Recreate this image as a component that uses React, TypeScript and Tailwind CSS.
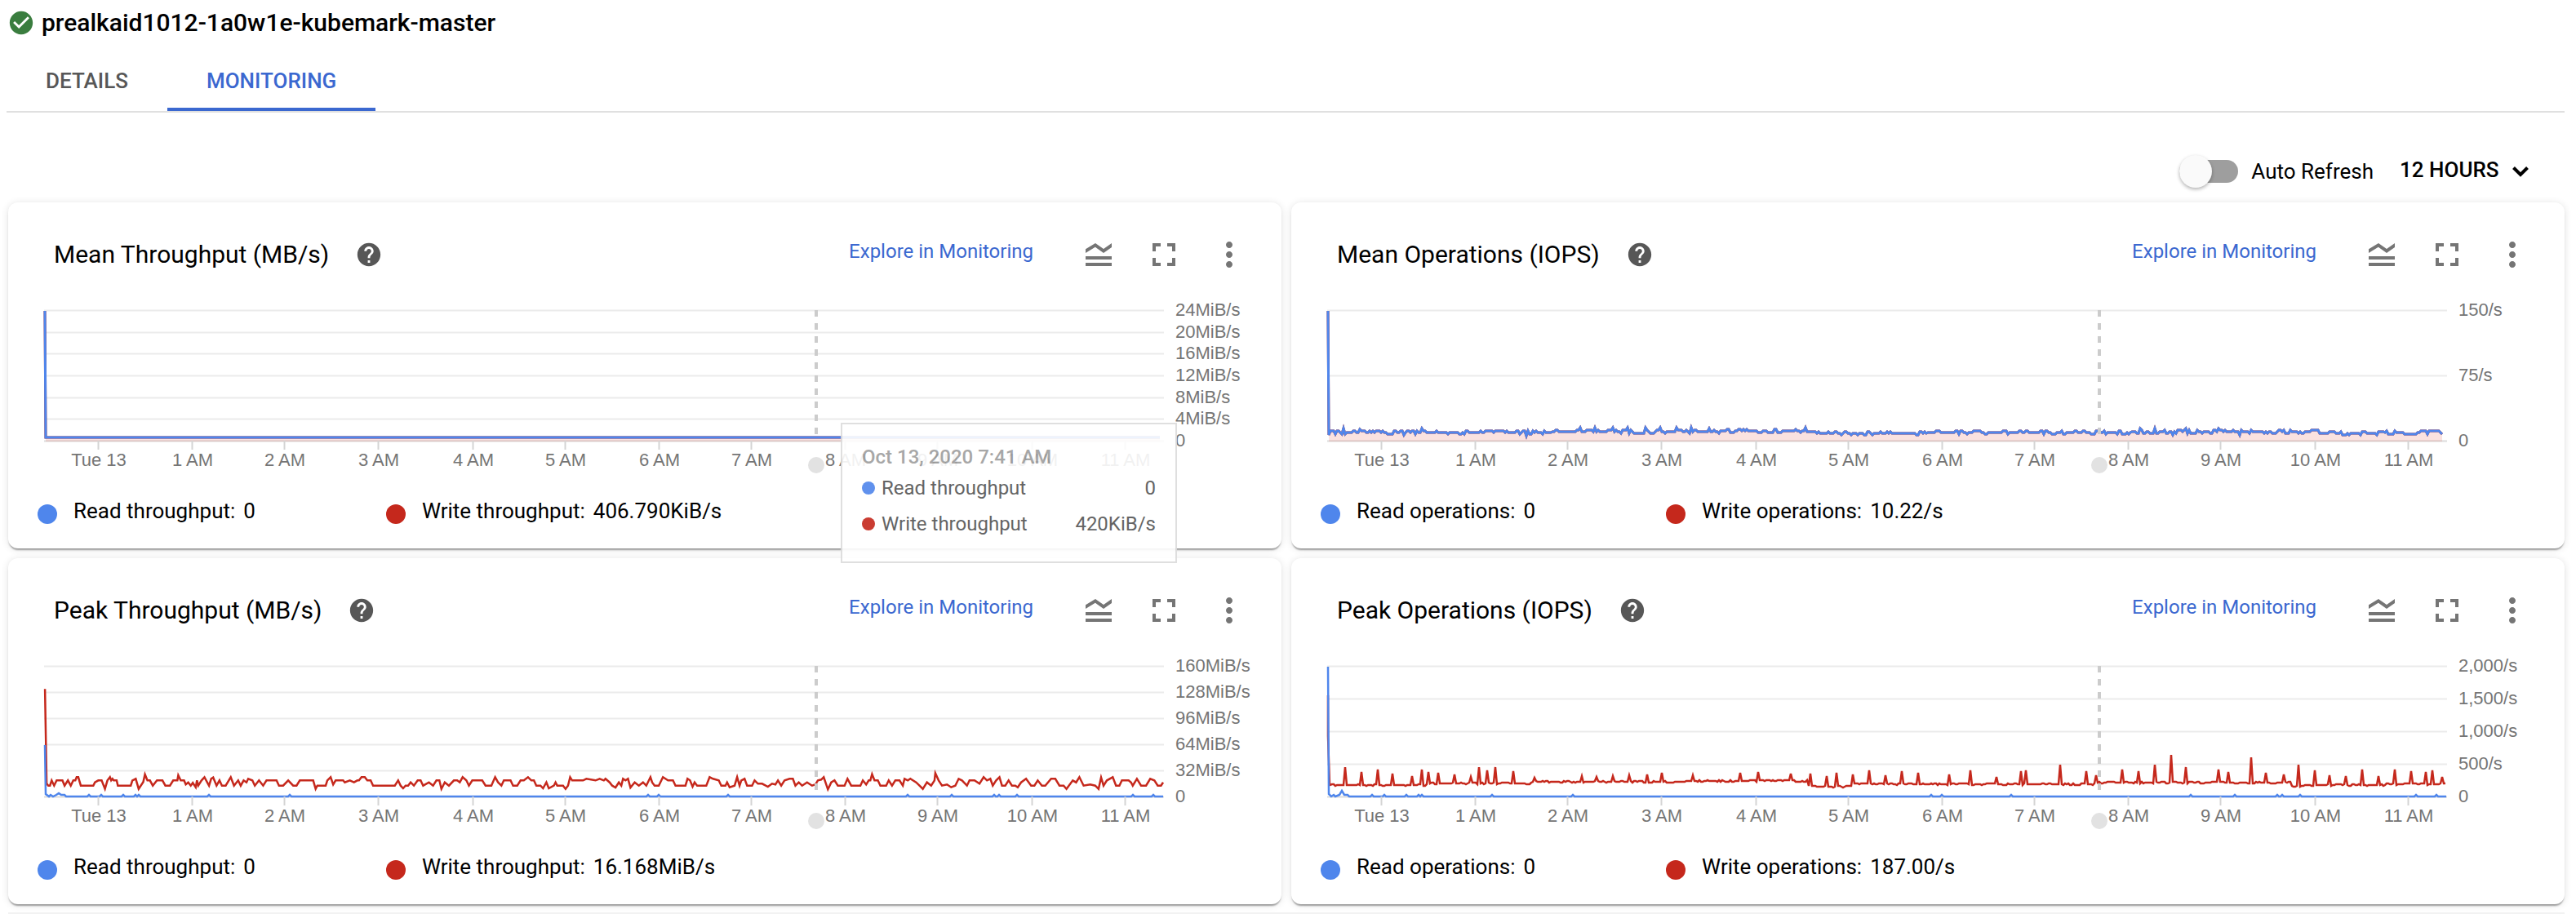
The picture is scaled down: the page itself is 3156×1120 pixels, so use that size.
import type { ReactNode } from "react";
import { MdCheckCircle, MdFullscreen, MdHelp, MdMoreVert } from "react-icons/md";

type Point = [number, number];

const BLUE = "#4f86ec";
const RED = "#c5281c";
const TICK_X = [110, 225, 338, 453, 569, 682, 797, 910, 1025, 1138, 1254, 1368];
const HOURS = ["Tue 13", "1 AM", "2 AM", "3 AM", "4 AM", "5 AM", "6 AM", "7 AM", "8 AM", "9 AM", "10 AM", "11 AM"];

/** Small deterministic noise source, so every render draws the same series. */
function noise(seed: number) {
  let s = seed;
  return () => {
    s = (s * 16807) % 2147483647;
    return s / 2147483647;
  };
}

/** A series that hovers around stepwise levels, with peaks and dips on top. */
function series(start: Point[], levels: Point[], peaks: Point[], end: number, step: number, seed: number): Point[] {
  const rand = noise(seed);
  const out: Point[] = [...start];
  let offset = 0;
  const first = Math.ceil(start[start.length - 1][0] / 2) * 2 + 2;
  for (let x = first; x <= end; x += 2) {
    let base = levels[0][1];
    for (const [from, value] of levels) if (x >= from) base = value;
    const peak = peaks.find(([px]) => px === x || px === x + 1);
    const r = rand();
    if (r < 0.22) offset = -step;
    else if (r < 0.34) offset = step;
    else if (r < 0.7) offset = 0;
    out.push([x, peak ? peak[1] : base + offset]);
  }
  return out;
}

const toPath = (pts: Point[]) => "M" + pts.map(([x, y]) => `${x} ${y}`).join("L");

const meanOps = series(
  [[45, 25], [46, 177]],
  [[44, 174], [320, 173], [525, 172], [630, 175], [780, 174], [1030, 173], [1260, 175], [1340, 174]],
  [[64, 169], [84, 170], [138, 177], [160, 169], [288, 178], [354, 168], [372, 168], [394, 168], [412, 168], [434, 168], [452, 168], [472, 168], [491, 168], [512, 169], [630, 168], [1040, 169], [1058, 169], [1080, 177], [1096, 169], [1136, 169], [1162, 177]],
  1410,
  2,
  77,
);

const peakOpsWrite = series(
  [[45, 60], [45, 110], [47, 170]],
  [[44, 170], [166, 168], [294, 166], [486, 165], [634, 172], [690, 169], [986, 167], [1225, 172], [1240, 170], [1340, 169]],
  [[66, 148], [86, 154], [107, 151], [125, 156], [148, 159], [161, 151], [168, 154], [180, 155], [200, 157], [220, 160], [230, 148], [241, 152], [250, 148], [272, 153], [298, 161], [356, 159], [374, 160], [395, 159], [414, 158], [436, 157], [454, 155], [492, 158], [550, 155], [572, 154], [612, 156], [636, 156], [656, 159], [668, 155], [688, 157], [708, 152], [728, 158], [748, 153], [768, 155], [806, 157], [832, 152], [864, 160], [894, 153], [900, 152], [942, 145], [974, 153], [986, 158], [1018, 151], [1038, 153], [1058, 145], [1078, 133], [1096, 148], [1136, 151], [1148, 154], [1176, 136], [1194, 155], [1216, 157], [1234, 145], [1254, 152], [1272, 158], [1292, 159], [1312, 151], [1332, 159], [1352, 151], [1372, 153], [1390, 154], [1398, 152], [1410, 160]],
  1414,
  1,
  4242,
);

/* Write peaks as pairs: time position, then level. */
const peakThroughputRaw: number[] = [
  108, 553, 112, 900, 116, 908, 120, 908, 124, 889, 130, 908, 136, 889, 150, 889, 155, 908, 163, 889, 170, 908, 176, 889, 181, 889, 184, 877, 188, 877, 194, 908, 224, 908, 228, 896, 236, 889, 244, 889, 252, 920, 258, 889, 264, 877, 267, 889, 270, 883, 273, 889, 280, 889, 283, 908, 314, 908, 318, 889, 326, 883, 333, 920, 344, 895, 348, 867, 354, 889, 360, 889, 367, 908, 377, 889, 390, 889, 397, 908, 408, 908, 416, 889, 426, 889, 428, 870, 434, 889, 442, 889, 446, 904, 452, 896, 458, 908, 463, 898, 470, 914, 473, 889, 476, 908, 484, 889, 491, 877, 502, 908, 507, 883, 512, 878, 520, 908, 527, 889, 533, 908, 542, 908, 554, 877, 562, 908, 572, 889, 578, 908, 585, 889, 592, 896, 596, 883, 606, 889, 612, 908, 622, 889, 632, 908, 640, 889, 664, 889, 670, 908, 680, 908, 692, 889, 704, 908, 712, 908, 720, 889, 752, 889, 758, 920, 762, 908, 782, 908, 786, 889, 794, 877, 800, 904, 806, 889, 824, 889, 828, 896, 840, 889, 850, 896, 858, 889, 862, 889, 868, 877, 876, 877, 882, 889, 890, 889, 896, 908, 948, 908, 956, 889, 962, 908, 968, 918, 974, 908, 980, 908, 986, 896, 994, 908, 1003, 889, 1010, 889, 1016, 908, 1030, 896, 1040, 908, 1048, 889, 1055, 889, 1060, 920, 1068, 896, 1078, 908, 1090, 889, 1098, 889, 1104, 896, 1111, 877, 1120, 889, 1126, 908, 1134, 889, 1158, 889, 1166, 908, 1180, 908, 1189, 877, 1196, 896, 1204, 908, 1210, 889, 1226, 889, 1232, 908, 1242, 908, 1250, 889, 1258, 889, 1268, 877, 1276, 889, 1282, 889, 1288, 908, 1298, 908, 1304, 918, 1312, 896, 1318, 918, 1330, 908, 1334, 896, 1338, 908, 1352, 908, 1358, 920, 1364, 908, 1369, 877, 1374, 889, 1390, 889, 1400, 889, 1408, 883, 1430, 889, 1440, 883, 1450, 889, 1454, 883, 1464, 896, 1470, 908, 1478, 915, 1486, 896, 1492, 908, 1496, 883, 1502, 889, 1508, 883, 1514, 915, 1524, 896, 1534, 908, 1544, 896, 1552, 908, 1562, 877, 1566, 896,
  1572, 908, 1582, 908, 1592, 877, 1598, 883, 1604, 889, 1616, 889, 1622, 908, 1646, 908, 1651, 883, 1657, 889, 1663, 912, 1668, 896, 1674, 908, 1696, 908, 1704, 877, 1712, 883, 1726, 889, 1732, 908, 1742, 908, 1746, 896, 1752, 914, 1764, 908, 1770, 877, 1776, 908, 1780, 889, 1788, 883, 1794, 908, 1806, 908, 1812, 889, 1820, 901, 1830, 901, 1844, 912, 1854, 901, 1862, 904, 1868, 889, 1876, 908, 1884, 889, 1896, 883, 1904, 883, 1910, 908, 1918, 896, 1926, 908, 1938, 896, 1950, 908, 1958, 904, 1964, 889, 1972, 886, 1978, 877, 1988, 922, 1996, 896, 2004, 889, 2012, 908, 2028, 908, 2035, 883, 2044, 908, 2066, 908, 2072, 889, 2080, 904, 2086, 889, 2090, 889, 2094, 866, 2100, 889, 2108, 889, 2114, 908, 2128, 908, 2134, 889, 2142, 908, 2150, 889, 2160, 889, 2168, 908, 2172, 883, 2180, 889, 2186, 883, 2200, 896, 2208, 908, 2216, 920, 2226, 896, 2236, 908, 2244, 889, 2246, 862, 2254, 889, 2262, 908, 2274, 904, 2284, 914, 2294, 908, 2302, 883, 2310, 889, 2322, 908, 2328, 889, 2340, 889, 2352, 901, 2362, 877, 2370, 889, 2378, 883, 2384, 908, 2392, 889, 2400, 877, 2406, 908, 2414, 908, 2422, 889, 2430, 908, 2438, 908, 2444, 914, 2452, 896, 2464, 883, 2476, 908, 2484, 908, 2492, 889, 2502, 908, 2510, 908, 2524, 883, 2534, 883, 2544, 908, 2554, 908, 2561, 920, 2576, 889, 2584, 896, 2592, 877, 2602, 908, 2618, 904, 2630, 908, 2638, 920, 2644, 878, 2650, 908, 2658, 889, 2672, 877, 2680, 908, 2688, 908, 2694, 889, 2710, 889, 2716, 896, 2720, 908, 2730, 883, 2740, 908, 2752, 908, 2762, 883, 2772, 889, 2780, 908, 2788, 908, 2793, 896,
];
const peakThroughputWrite: Point[] = [];
for (let i = 0; i < peakThroughputRaw.length; i += 2) {
  peakThroughputWrite.push([
    Math.round((peakThroughputRaw[i] / 1.96 - 10) * 10) / 10,
    Math.round((peakThroughputRaw[i + 1] / 3 - 132) * 10) / 10,
  ]);
}

/** The read series lies on the axis, with tiny bumps. */
function flatWithBumps(start: Point[], bumps: number[]): Point[] {
  const out = [...start];
  for (const x of bumps) out.push([x - 2, 184], [x, 182], [x + 2, 184]);
  out.push([1415, 184]);
  return out;
}
const BUMPS = [99, 114, 141, 156, 160, 246, 345, 784, 797, 882, 1102, 1156, 1208, 1214, 1236, 1378, 1403];
const peakThroughputRead = flatWithBumps([[45, 121], [46, 181], [50, 184], [52, 182], [55, 184], [59, 182], [62, 180], [65, 182], [69, 182], [71, 184]], BUMPS);
const peakOpsRead = flatWithBumps([[45, 25], [46, 181], [49, 184], [52, 182], [54, 184], [59, 182], [62, 177], [65, 182], [69, 182], [71, 184]], BUMPS);

const meanThroughput: Point[] = [[45, 25], [46, 180], [1411, 180]];

type CardData = {
  title: string;
  labels: string[];
  write: Point[];
  read: Point[];
  filled: boolean;
  legend: [string, string][];
  tooltip?: boolean;
};

const CARDS: CardData[] = [
  {
    title: "Mean Throughput (MB/s)",
    labels: ["24MiB/s", "20MiB/s", "16MiB/s", "12MiB/s", "8MiB/s", "4MiB/s", "0"],
    write: meanThroughput,
    read: meanThroughput,
    filled: true,
    legend: [["Read throughput:", "0"], ["Write throughput:", "406.790KiB/s"]],
    tooltip: true,
  },
  {
    title: "Mean Operations (IOPS)",
    labels: ["150/s", "75/s", "0"],
    write: meanOps,
    read: meanOps,
    filled: true,
    legend: [["Read operations:", "0"], ["Write operations:", "10.22/s"]],
  },
  {
    title: "Peak Throughput (MB/s)",
    labels: ["160MiB/s", "128MiB/s", "96MiB/s", "64MiB/s", "32MiB/s", "0"],
    write: peakThroughputWrite,
    read: peakThroughputRead,
    filled: false,
    legend: [["Read throughput:", "0"], ["Write throughput:", "16.168MiB/s"]],
  },
  {
    title: "Peak Operations (IOPS)",
    labels: ["2,000/s", "1,500/s", "1,000/s", "500/s", "0"],
    write: peakOpsWrite,
    read: peakOpsRead,
    filled: false,
    legend: [["Read operations:", "0"], ["Write operations:", "187.00/s"]],
  },
];

function Chart({ card }: { card: CardData }) {
  const gaps = card.labels.length - 1;
  const stroke = card.filled ? 3 : 2.5;
  return (
    <svg viewBox="0 0 1560 236" className="mt-5 block w-full" role="img" aria-label={card.title}>
      {card.labels.map((label, i) => {
        const y = 24.5 + Math.round((160 * i) / gaps);
        const last = i === gaps;
        return (
          <g key={label}>
            <line x1="44" x2="1416" y1={y} y2={y} stroke={last ? "#dcdcdc" : "#ebebeb"} strokeWidth="2" />
            <text x="1430" y={Math.floor(y) + 7} className="fill-[#757575] font-['Liberation_Sans',Arial,sans-serif] text-[22px]">
              {label}
            </text>
          </g>
        );
      })}
      {card.filled && <path d={toPath(card.write) + "V185H46Z"} fill="#d93025" fillOpacity="0.14" />}
      <path d={toPath(card.write)} fill="none" stroke={RED} strokeWidth={stroke} />
      <path d={toPath(card.read)} fill="none" stroke={BLUE} strokeWidth={stroke} />
      {TICK_X.map((x, i) => (
        <g key={HOURS[i]}>
          <line x1={x + 0.5} x2={x + 0.5} y1="184" y2="195" stroke="#d4d4d4" strokeWidth="2" />
          <text x={x + 1} y="215" textAnchor="middle" className="fill-[#757575] font-['Liberation_Sans',Arial,sans-serif] text-[22px]">
            {HOURS[i]}
          </text>
        </g>
      ))}
      <line x1="990" x2="990" y1="24" y2="176" stroke="#cccccc" strokeWidth="4" strokeDasharray="8 8" />
      <circle cx="990" cy="214" r="10" fill="#e2e2e2" />
    </svg>
  );
}

function IconButton({ label, children }: { label: string; children: ReactNode }) {
  return (
    <button type="button" aria-label={label} className="flex size-12 items-center justify-center text-[#757575]">
      {children}
    </button>
  );
}

function Tooltip() {
  return (
    <div className="absolute left-[1020px] top-[270px] z-10 w-[412px] border-2 border-[#dcdcdc] bg-white p-6 text-2xl opacity-90">
      <p className="leading-8 font-medium text-[#9e9e9e]">Oct 13, 2020 7:41 AM</p>
      <div className="flex h-11 items-center gap-2 text-[#545454]">
        <span className="size-4 rounded-full bg-[#4f86ec]" />
        <span className="grow">Read throughput</span>
        <span>0</span>
      </div>
      <div className="flex h-11 items-center gap-2 text-[#545454]">
        <span className="size-4 rounded-full bg-[#c5281c]" />
        <span className="grow">Write throughput</span>
        <span>420KiB/s</span>
      </div>
    </div>
  );
}

function Card({ card }: { card: CardData }) {
  return (
    <section className="relative rounded-xl bg-white pt-10 pb-[26px] shadow-[0_3px_2px_-1px_rgba(0,0,0,0.36),0_1px_10px_rgba(0,0,0,0.12)]">
      <header className="flex h-12 items-center pr-10 pl-14">
        <h2 className="text-[30px] leading-9">{card.title}</h2>
        <button type="button" aria-label={"About " + card.title} className="ml-8 text-[#575757]">
          <MdHelp className="size-[34px]" />
        </button>
        <a href="#explore" className="mr-14 mb-2 ml-auto text-2xl text-[#3b68d0]">
          Explore in Monitoring
        </a>
        <div className="flex gap-8">
          <IconButton label="Toggle legend">
            <svg viewBox="0 0 24 24" className="size-12" fill="currentColor">
              <path d="M20 15H4v-2h16v2zm0 2H4v2h16v-2zm-5-6l5-3.55V5l-5 3.55L10 5 4 8.66V11l5.92-3.61L15 11z" />
            </svg>
          </IconButton>
          <IconButton label="Full screen">
            <MdFullscreen className="size-12" />
          </IconButton>
          <IconButton label="More options">
            <MdMoreVert className="size-12" />
          </IconButton>
        </div>
      </header>
      <Chart card={card} />
      <ul className="mt-[22px] flex gap-40 pl-9">
        {card.legend.map(([name, value], i) => (
          <li key={name} className="flex h-8 items-center text-[26px]">
            <span className={i === 0 ? "size-6 rounded-full bg-[#4f86ec]" : "size-6 rounded-full bg-[#c5281c]"} />
            <span className="mb-2 ml-5">{name}</span>
            <span className="mb-2 ml-[10px]">{value}</span>
          </li>
        ))}
      </ul>
      {card.tooltip && <Tooltip />}
    </section>
  );
}

export default function App() {
  return (
    <div className="bg-white font-[Roboto,sans-serif] text-black">
      <div className="flex h-14 items-center gap-2 pl-[9px]">
        <MdCheckCircle className="size-[34px] text-[#3a7d3f]" />
        <h1 className="text-[30px] leading-9 font-medium">prealkaid1012-1a0w1e-kubemark-master</h1>
      </div>
      <nav className="mr-[14px] ml-2 flex h-[82px] border-b-2 border-[#e0e0e0] text-[26px] font-medium">
        <a href="#details" className="flex items-center border-b-4 border-transparent px-12 pt-[10px] text-[#575757]">
          DETAILS
        </a>
        <a href="#monitoring" aria-current="page" className="flex items-center border-b-4 border-[#3b68d0] px-12 pt-[10px] text-[#3b68d0]">
          MONITORING
        </a>
      </nav>
      <div className="flex h-[110px] items-end justify-end pr-14 pb-[18px]">
        <label className="flex h-10 items-center text-[26px]">
          <input type="checkbox" role="switch" className="peer sr-only" />
          <span className="flex h-7 w-[72px] items-center rounded-full bg-[#9e9e9e]">
            <span className="size-10 shrink-0 rounded-full bg-[#fafafa] shadow-[0_2px_4px_rgba(0,0,0,0.3)]" />
          </span>
          <span className="ml-4">Auto Refresh</span>
        </label>
        <div className="relative ml-8 flex h-10 items-center">
          <select aria-label="Time range" className="appearance-none pr-[38px] pb-1 text-[26px] font-medium">
            <option>12 HOURS</option>
          </select>
          <svg viewBox="0 0 24 16" className="pointer-events-none absolute right-0 w-6" fill="none" stroke="black" strokeWidth="4">
            <path d="M3.500 3.500L12 12l8.500-8.500" />
          </svg>
        </div>
      </div>
      <main className="grid grid-cols-2 gap-3 pr-[14px] pl-[10px]">
        {CARDS.map((card) => (
          <Card key={card.title} card={card} />
        ))}
      </main>
      <div className="mt-[10px] mr-[14px] ml-[10px] h-[2px] bg-[#f2f2f2]" />
    </div>
  );
}
